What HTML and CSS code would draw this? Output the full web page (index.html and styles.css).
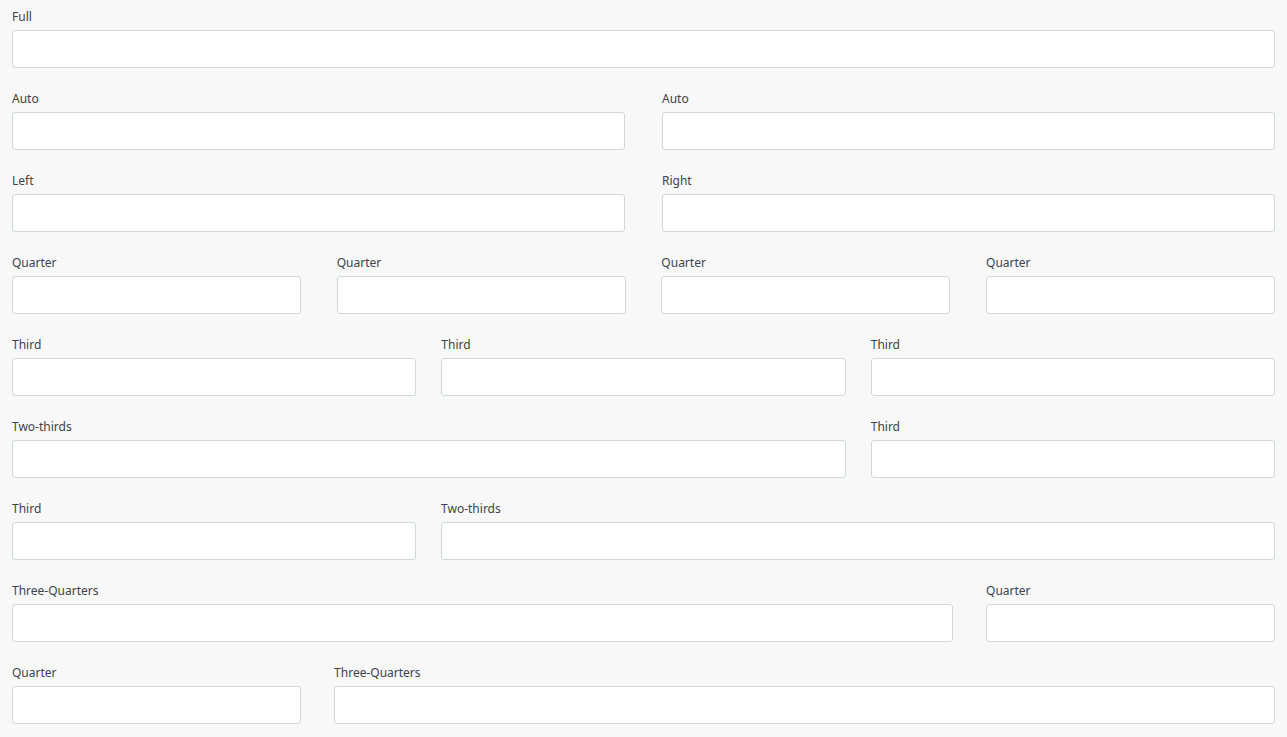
FILE: index.html
```html
<!DOCTYPE html>
<html>
<head>
<meta charset="utf-8">
<link rel="stylesheet" href="styles.css">
</head>
<body>
<form class="form">
  <div class="row">
    <div class="field w-full"><label>Full</label><input type="text"></div>
  </div>
  <div class="row">
    <div class="field w-half"><label>Auto</label><input type="text"></div>
    <div class="field w-half"><label>Auto</label><input type="text"></div>
  </div>
  <div class="row">
    <div class="field w-half"><label>Left</label><input type="text"></div>
    <div class="field w-half"><label>Right</label><input type="text"></div>
  </div>
  <div class="row">
    <div class="field w-quarter"><label>Quarter</label><input type="text"></div>
    <div class="field w-quarter"><label>Quarter</label><input type="text"></div>
    <div class="field w-quarter"><label>Quarter</label><input type="text"></div>
    <div class="field w-quarter"><label>Quarter</label><input type="text"></div>
  </div>
  <div class="row">
    <div class="field w-third"><label>Third</label><input type="text"></div>
    <div class="field w-third"><label>Third</label><input type="text"></div>
    <div class="field w-third"><label>Third</label><input type="text"></div>
  </div>
  <div class="row">
    <div class="field w-two-thirds"><label>Two-thirds</label><input type="text"></div>
    <div class="field w-third"><label>Third</label><input type="text"></div>
  </div>
  <div class="row">
    <div class="field w-third"><label>Third</label><input type="text"></div>
    <div class="field w-two-thirds"><label>Two-thirds</label><input type="text"></div>
  </div>
  <div class="row">
    <div class="field w-three-quarters"><label>Three-Quarters</label><input type="text"></div>
    <div class="field w-quarter"><label>Quarter</label><input type="text"></div>
  </div>
  <div class="row">
    <div class="field w-quarter"><label>Quarter</label><input type="text"></div>
    <div class="field w-three-quarters"><label>Three-Quarters</label><input type="text"></div>
  </div>
</form>
</body>
</html>
```
FILE: styles.css
```css
html, body {
  margin: 0;
  padding: 0;
  background: #f8f8f8;
}
body {
  padding: 8px 12px 0 12px;
  font-family: "Noto Sans", "Open Sans", sans-serif;
  font-size: 12px;
  color: #3c434a;
}
.form {
  display: flex;
  flex-direction: column;
  gap: 22px;
}
.row {
  display: flex;
  justify-content: space-between;
}
.field {
  display: flex;
  flex-direction: column;
  gap: 4px;
}
.field label {
  line-height: 18px;
  height: 18px;
}
.field input {
  box-sizing: border-box;
  height: 38px;
  width: 100%;
  margin: 0;
  background: #fff;
  border: 1px solid #d3d7d7;
  border-radius: 3px;
  font: inherit;
}
.w-full { width: 100%; }
.w-half { width: 48.535%; }
.w-quarter { width: 22.882%; }
.w-third { width: 32.01%; }
.w-two-thirds { width: 66.03%; }
.w-three-quarters { width: 74.5%; }
```
